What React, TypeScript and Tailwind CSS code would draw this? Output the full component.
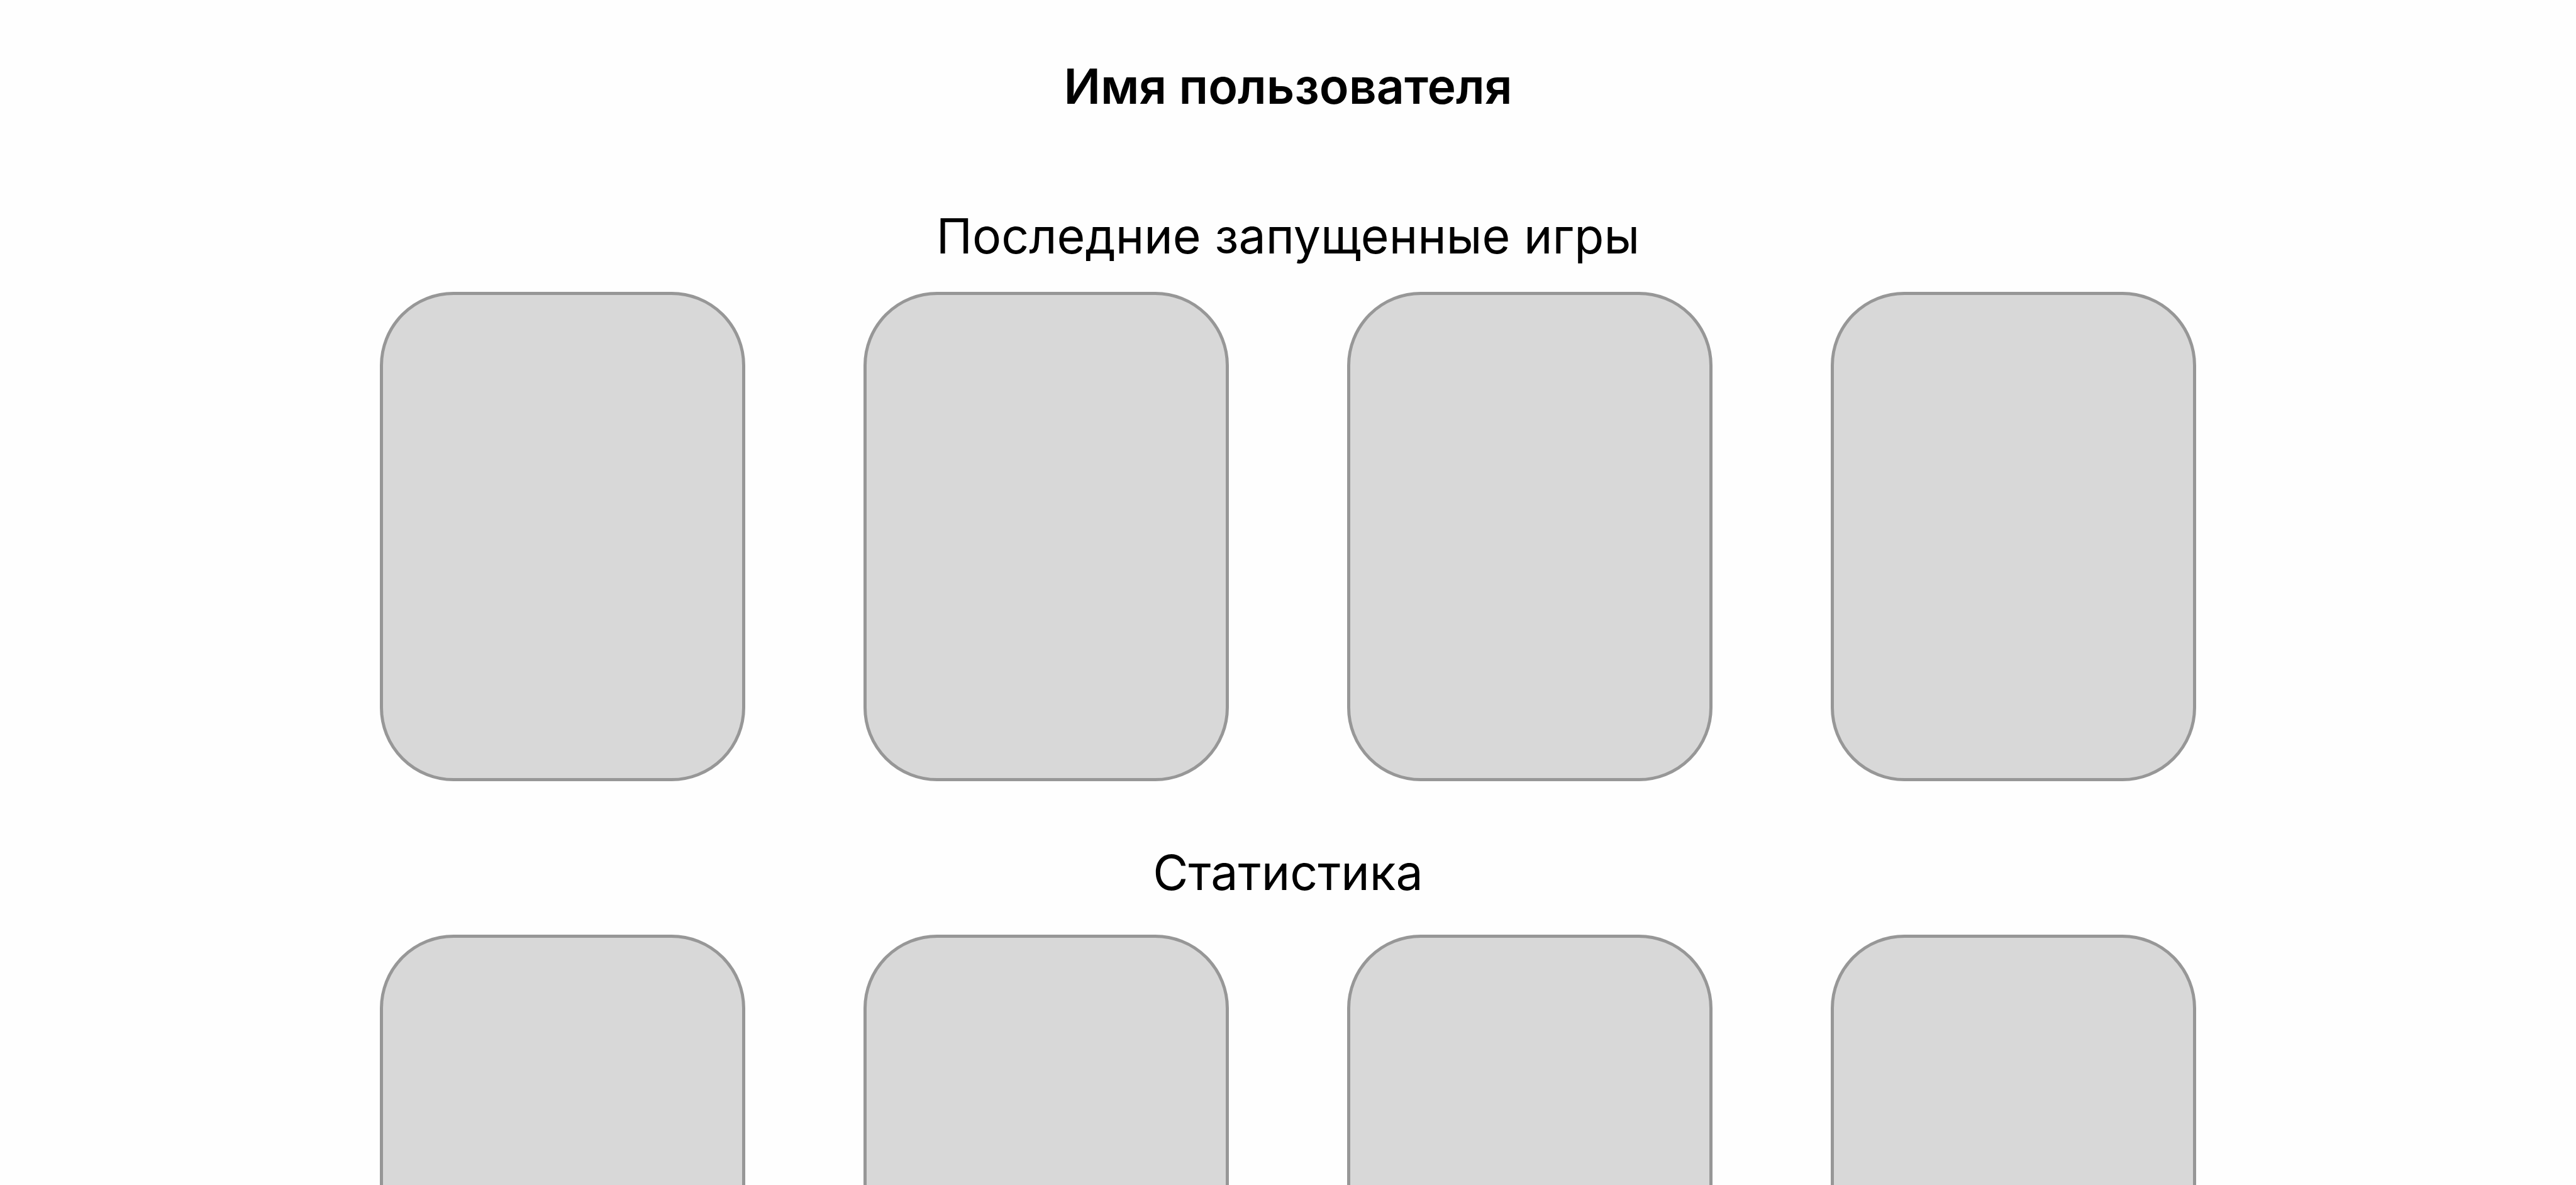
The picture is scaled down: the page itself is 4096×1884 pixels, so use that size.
type ShelfProps = {
  id: string;
  title: string;
  items: string[];
  className: string;
};

const recentGames = ['game-1', 'game-2', 'game-3', 'game-4'];
const statistics = ['stat-1', 'stat-2', 'stat-3', 'stat-4'];

function Shelf({ id, title, items, className }: ShelfProps) {
  return (
    <section aria-labelledby={id} className={`flex w-full flex-col items-center ${className}`}>
      <h2 id={id} className="text-center text-[77px] leading-[94px] font-normal">
        {title}
      </h2>
      <ul className="grid w-full max-w-[2888px] grid-cols-4 gap-[188px]">
        {items.map((item) => (
          <li
            key={item}
            className="aspect-[581/778] rounded-[117px] border-[5px] border-[#979797] bg-[#d8d8d8]"
          />
        ))}
      </ul>
    </section>
  );
}

export default function App() {
  return (
    <main className="flex h-screen flex-col items-center overflow-hidden bg-[#fefefe] pt-[90px] font-['Inter',sans-serif] text-black">
      <h1 className="text-center text-[77px] leading-[94px] font-semibold">Имя пользователя</h1>
      <Shelf
        id="recent-games"
        title="Последние запущенные игры"
        items={recentGames}
        className="mt-[144px] gap-[42px]"
      />
      <Shelf id="statistics" title="Статистика" items={statistics} className="mt-[98px] gap-[52px]" />
    </main>
  );
}
